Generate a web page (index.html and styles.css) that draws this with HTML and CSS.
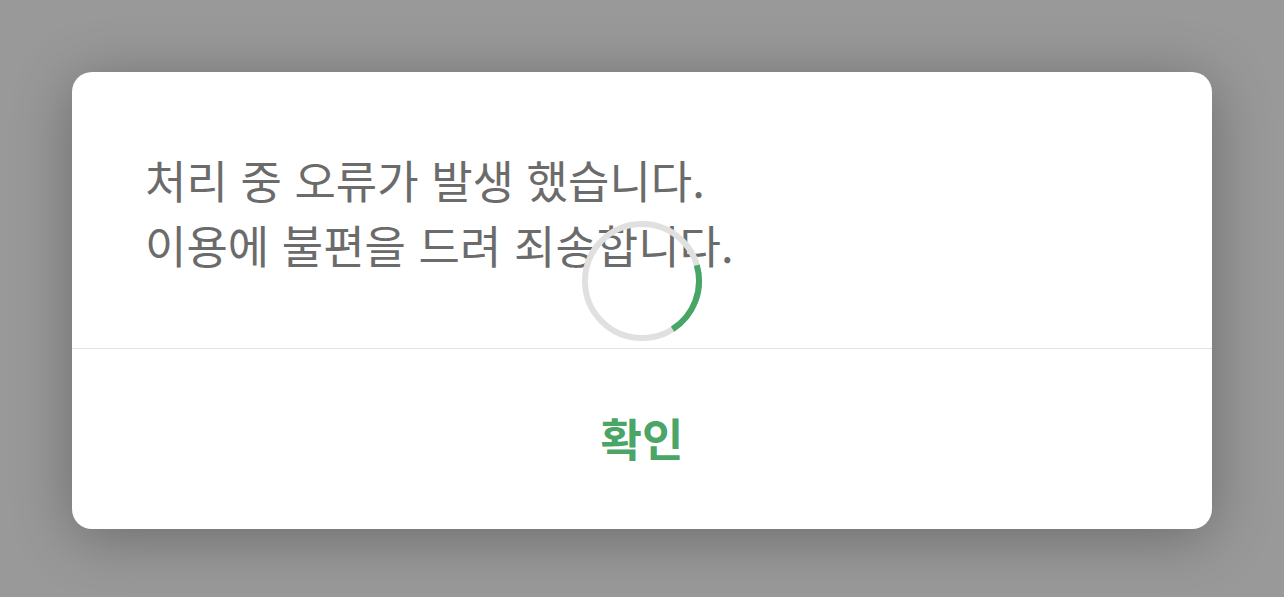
FILE: index.html
```html
<!DOCTYPE html>
<html lang="ko">
<head>
    <meta charset="UTF-8">
    <meta name="viewport" content="width=device-width, initial-scale=1.0">
    <title>오류</title>
    <link rel="stylesheet" href="styles.css">
</head>
<body>
    <div class="dialog">
        <div class="message">
            <p>처리 중 오류가 발생 했습니다.</p>
            <p>이용에 불편을 드려 죄송합니다.</p>
        </div>
        <div class="actions">
            <button class="confirm-button">확인</button>
        </div>

        <!-- 로딩 스피너 -->
        <svg class="spinner" width="124" height="124" viewBox="0 0 124 124">
            <circle cx="62" cy="62" r="57" fill="none" stroke="#e0e0e0" stroke-width="6"/>
            <circle cx="62" cy="62" r="57" fill="none" stroke="#47a565" stroke-width="6"
                    stroke-dasharray="73 358" transform="rotate(-16 62 62)"/>
        </svg>
    </div>
</body>
</html>
```

FILE: styles.css
```css
body {
    font-family: "Noto Sans CJK KR", "Noto Sans", sans-serif;
    margin: 0;
    padding: 72px;
    height: 597px;
    box-sizing: border-box;
    background-color: #999999;
    overflow: hidden;
}

.dialog {
    position: relative;
    background: white;
    border-radius: 20px;
    box-shadow: 0 8px 60px rgba(0,0,0,0.3);
    overflow: hidden;
}

.message {
    padding: 75px 73px 71px;
    border-bottom: 1px solid #e2e2e2;
}

.message p {
    margin: 0;
    font-size: 45px;
    line-height: 65px;
    color: #6b6b6b;
}

.actions {
    display: flex;
    align-items: center;
    justify-content: center;
    height: 180px;
}

.confirm-button {
    border: none;
    background: transparent;
    font-family: inherit;
    font-size: 45px;
    font-weight: 600;
    color: #4aa566;
    padding: 0;
    margin-top: -3px;
    cursor: pointer;
}

.spinner {
    position: absolute;
    left: 508px;
    top: 147px;
}
```
